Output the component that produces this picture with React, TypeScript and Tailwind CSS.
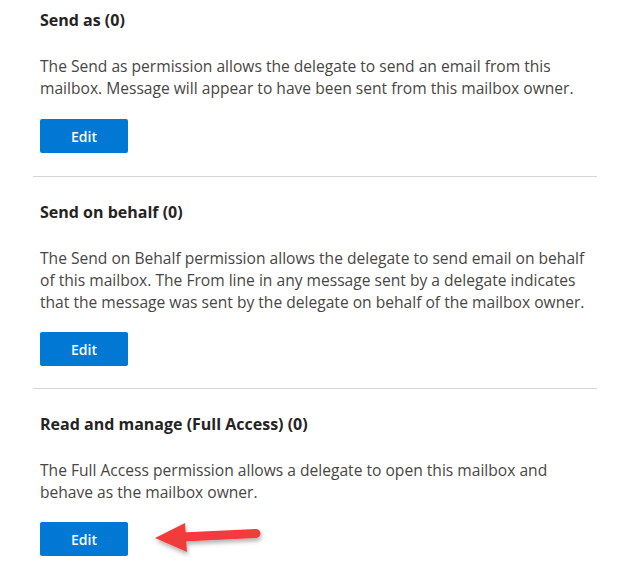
import React from "react";

interface SectionProps {
  title: string;
  text: string;
  first?: boolean;
  last?: boolean;
  arrow?: boolean;
}

const Section = ({ title, text, first, last, arrow }: SectionProps) => {
  return (
    <div
      className={`${last ? "" : "border-b border-[#d6d6d6]"} ${
        first ? "pb-[23px]" : "pb-[22px]"
      } pt-[24px] px-[7px]`}
    >
      <h3 className="text-[16px] leading-[22px] font-bold text-[#252423]">{title}</h3>
      <p className="mt-[24px] text-[15.6px] leading-[22px] text-[#484644]">{text}</p>
      <div className={`relative ${first ? "mt-[20px]" : "mt-[19px]"}`}>
        <button className="bg-[#0078d4] text-white text-[14px] font-semibold w-[88px] h-[34px] rounded-[2px]">
          Edit
        </button>
        {arrow ? (
          <svg
            className="absolute left-[112px] top-[-7px]"
            width="120"
            height="42"
            viewBox="0 0 120 42"
          >
            <defs>
              <filter id="sh" x="-20%" y="-50%" width="140%" height="200%">
                <feDropShadow dx="1" dy="3" stdDeviation="2" floodColor="#000" floodOpacity="0.3" />
              </filter>
            </defs>
            <g filter="url(#sh)">
              <path d="M30 22 L104 18.5" stroke="#f23b3b" strokeWidth="9" strokeLinecap="round" fill="none" />
              <path d="M3 23 L33 8 L35 37 Z" fill="#f23b3b" />
            </g>
          </svg>
        ) : null}
      </div>
    </div>
  );
};

export default function App() {
  return (
    <div
      className="w-[617px] h-[568px] bg-white overflow-hidden"
      style={{ fontFamily: '"Open Sans", "Noto Sans", sans-serif' }}
    >
      <div className="ml-[33px] w-[564px] mt-[-15px]">
        <Section
          title="Send as (0)"
          text="The Send as permission allows the delegate to send an email from this mailbox. Message will appear to have been sent from this mailbox owner."
          first
        />
        <Section
          title="Send on behalf (0)"
          text="The Send on Behalf permission allows the delegate to send email on behalf of this mailbox. The From line in any message sent by a delegate indicates that the message was sent by the delegate on behalf of the mailbox owner."
        />
        <Section
          title="Read and manage (Full Access) (0)"
          text="The Full Access permission allows a delegate to open this mailbox and behave as the mailbox owner."
          last
          arrow
        />
      </div>
    </div>
  );
}
